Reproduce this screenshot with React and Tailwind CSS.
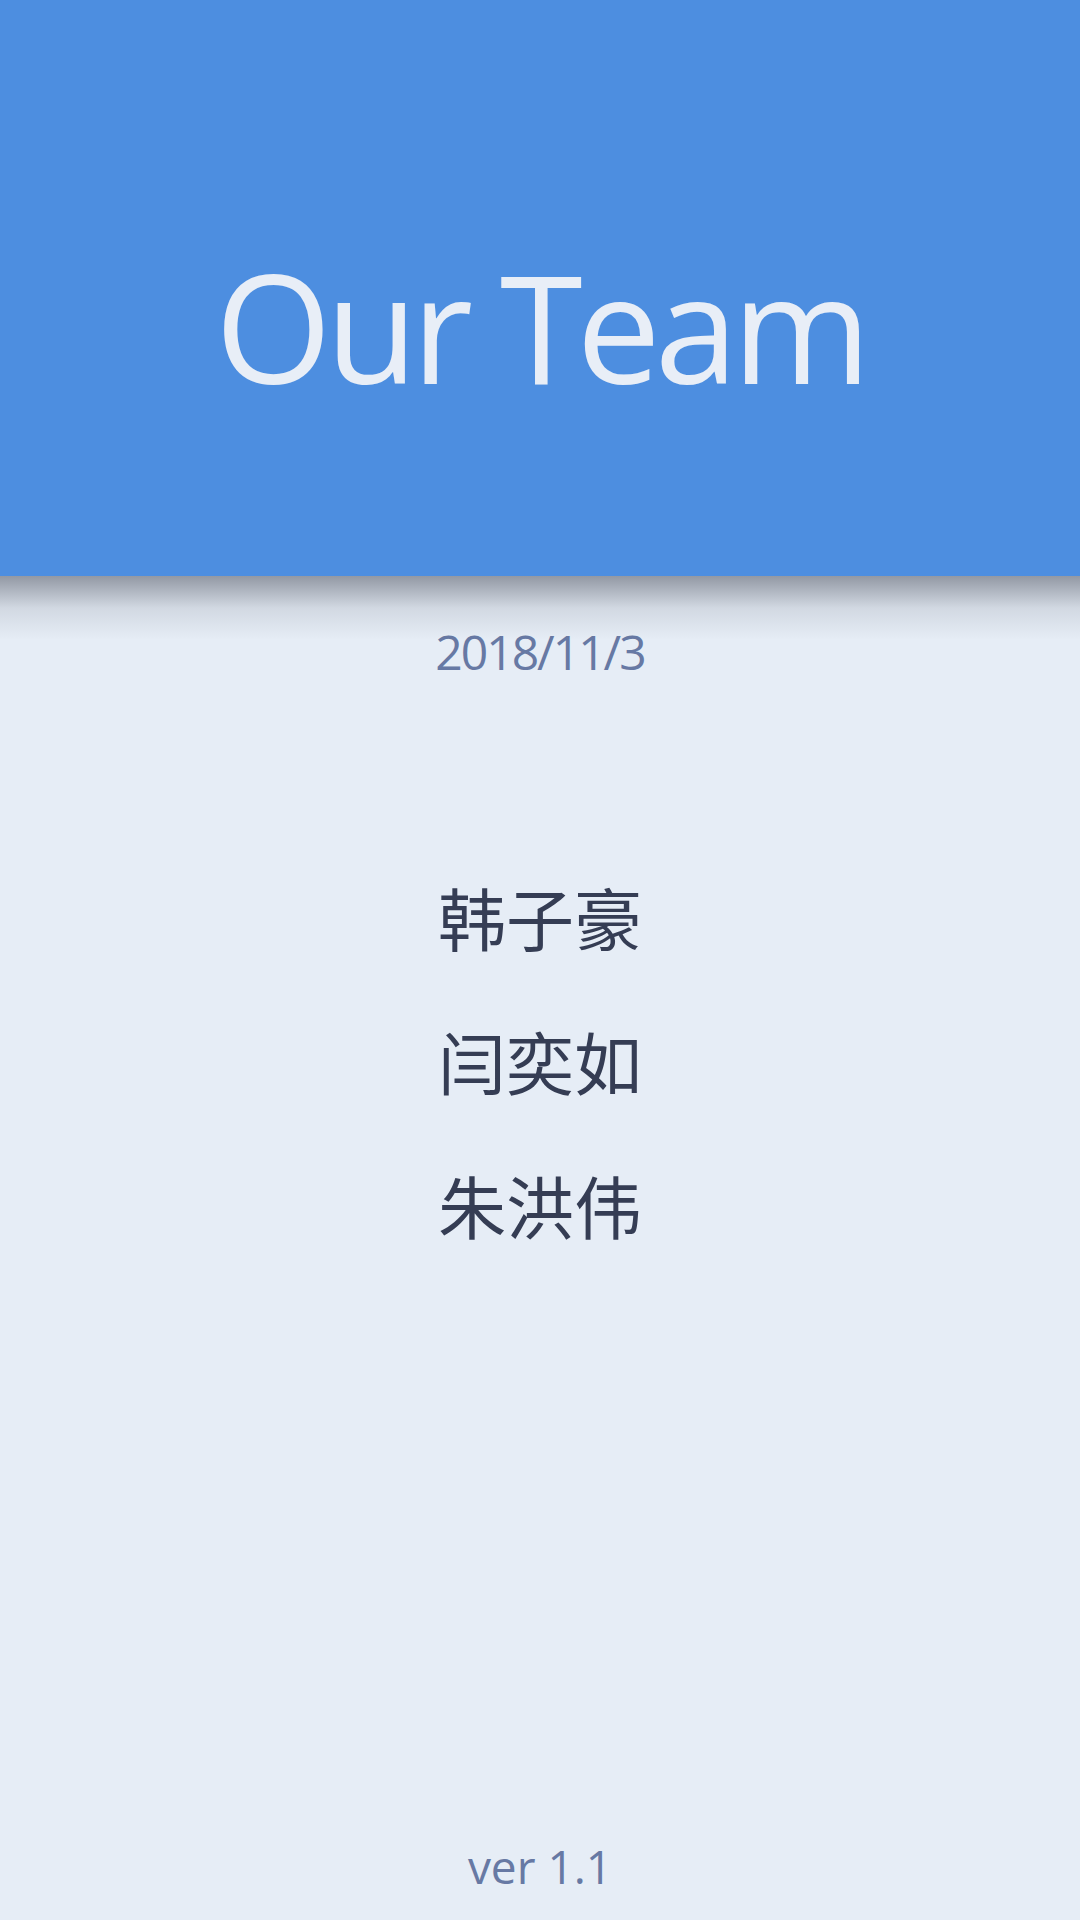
export default function App() {
  return (
    <div
      className="relative flex h-[1920px] w-[1080px] flex-col items-center overflow-hidden bg-[#e6edf6]"
      style={{ fontFamily: '"Open Sans", "Noto Sans", sans-serif' }}
    >
      <header className="relative flex h-[576px] w-full shrink-0 flex-col items-center bg-[#4d8ee0] pt-[251px]">
        <h1 className="text-[150px] leading-none font-normal tracking-[-6px] text-[#e8eef7]">
          Our Team
        </h1>
        <div className="pointer-events-none absolute top-full left-0 right-0 h-[64px] bg-gradient-to-b from-[rgba(30,35,50,0.42)] via-[rgba(30,35,50,0.1)] to-transparent" />
      </header>

      <div className="mt-[52px] text-[48px] leading-none tracking-[-2px] text-[#6779a4]">
        2018/11/3
      </div>

      <div
        className="mt-[207px] flex flex-col items-center gap-[76px] text-[68px] leading-none text-[#353d54]"
        style={{ fontFamily: '"Noto Sans CJK SC", "Noto Sans", sans-serif' }}
      >
        <div>韩子豪</div>
        <div>闫奕如</div>
        <div>朱洪伟</div>
      </div>

      <div className="mt-auto pb-[31px] text-[46px] leading-none text-[#6779a4]">
        ver 1.1
      </div>
    </div>
  );
}
